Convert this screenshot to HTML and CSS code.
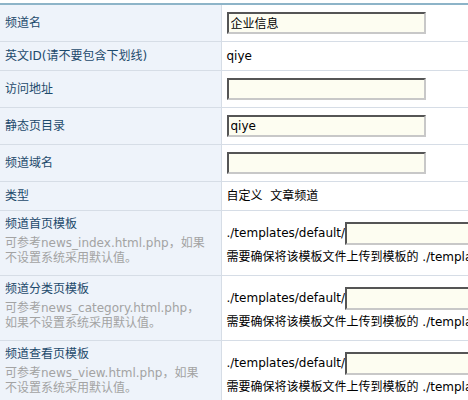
FILE: index.html
```html
<!DOCTYPE html>
<html lang="zh-CN">
<head>
    <meta charset="UTF-8">
    <title>频道设置</title>
    <link rel="stylesheet" href="styles.css">
</head>
<body>
    <table class="form-table">
        <colgroup>
            <col class="col-label">
            <col>
        </colgroup>
        <tr>
            <td class="label">频道名</td>
            <td><input type="text" class="txt" value="企业信息"></td>
        </tr>
        <tr class="text-row">
            <td class="label">英文ID(请不要包含下划线)</td>
            <td>qiye</td>
        </tr>
        <tr>
            <td class="label">访问地址</td>
            <td><input type="text" class="txt" value=""></td>
        </tr>
        <tr>
            <td class="label">静态页目录</td>
            <td><input type="text" class="txt" value="qiye"></td>
        </tr>
        <tr>
            <td class="label">频道域名</td>
            <td><input type="text" class="txt" value=""></td>
        </tr>
        <tr class="text-row">
            <td class="label">类型</td>
            <td>自定义&nbsp; 文章频道</td>
        </tr>
        <!-- 模板设置 -->
        <tr class="tpl">
            <td class="label label-top">
                <div class="title">频道首页模板</div>
                <div class="tip">可参考news_index.html.php，如果<br>不设置系统采用默认值。</div>
            </td>
            <td class="tpl-cell">
                <div class="path">./templates/default/<input type="text" class="txt txt-tpl" value=""></div>
                <div>需要确保将该模板文件上传到模板的 ./templates/default/ 目录下</div>
            </td>
        </tr>
        <tr class="tpl">
            <td class="label label-top">
                <div class="title">频道分类页模板</div>
                <div class="tip">可参考news_category.html.php，<br>如果不设置系统采用默认值。</div>
            </td>
            <td class="tpl-cell">
                <div class="path">./templates/default/<input type="text" class="txt txt-tpl" value=""></div>
                <div>需要确保将该模板文件上传到模板的 ./templates/default/ 目录下</div>
            </td>
        </tr>
        <tr class="tpl">
            <td class="label label-top">
                <div class="title">频道查看页模板</div>
                <div class="tip">可参考news_view.html.php，如果<br>不设置系统采用默认值。</div>
            </td>
            <td class="tpl-cell">
                <div class="path">./templates/default/<input type="text" class="txt txt-tpl" value=""></div>
                <div>需要确保将该模板文件上传到模板的 ./templates/default/ 目录下</div>
            </td>
        </tr>
    </table>
</body>
</html>
```

FILE: styles.css
```css
/* Reset */
* {
    margin: 0;
    padding: 0;
    box-sizing: border-box;
}

body {
    font-family: "DejaVu Sans", "Noto Sans CJK SC", sans-serif;
    font-size: 12px;
    color: #000;
    background: #fff;
    padding-top: 3px;
    overflow: hidden;
}

/* Tabela do formulário */
.form-table {
    width: 468px;
    table-layout: fixed;
    border-collapse: collapse;
    border-top: 2px solid #8db4c8;
}

.col-label {
    width: 221px;
}

.form-table td {
    height: 37px;
    padding: 0 5px;
    line-height: 16px;
    vertical-align: middle;
    border-bottom: 1px solid #d6dde6;
    white-space: nowrap;
}

.form-table .text-row td {
    height: 29px;
}

.form-table td.label {
    background-color: #eef3fa;
    color: #1d4a6c;
    border-right: 1px solid #d6dde6;
}

/* Campos de texto */
.txt {
    width: 199px;
    height: 22px;
    padding: 0 2px;
    font-family: "DejaVu Sans", "Noto Sans CJK SC", sans-serif;
    font-size: 12px;
    color: #000;
    background-color: #fdfdf1;
    border: 2px solid;
    border-color: #555 #c8c8c8 #c8c8c8 #555;
    vertical-align: middle;
    outline: none;
}

/* Linhas de modelo */
.form-table .tpl td {
    height: 65px;
}

.form-table td.label-top {
    vertical-align: top;
    padding-top: 6px;
}

.title {
    line-height: 15px;
}

.tip {
    margin-top: 4px;
    line-height: 15px;
    color: #a3a3a3;
}

.form-table td.tpl-cell {
    vertical-align: top;
    padding-top: 11px;
}

.tpl-cell .path {
    height: 23px;
    line-height: 23px;
    margin-bottom: 4px;
}

.txt-tpl {
    width: 200px;
    height: 23px;
    vertical-align: top;
}
```
